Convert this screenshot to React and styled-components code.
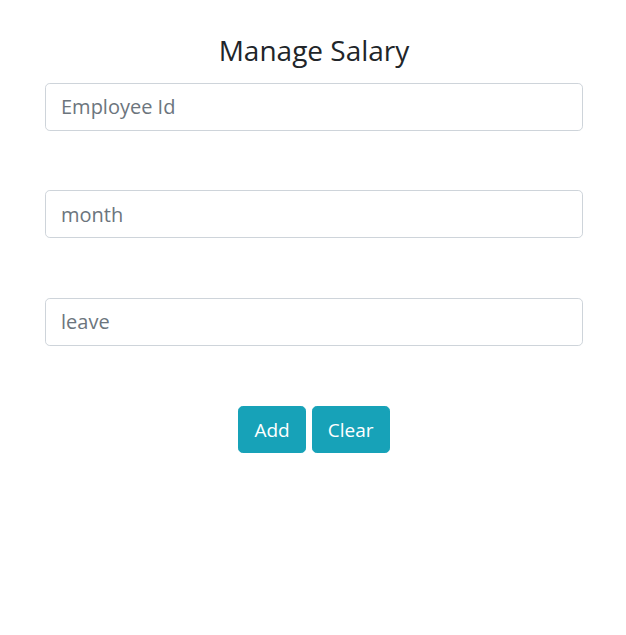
import React from 'react';
import styled, { createGlobalStyle } from 'styled-components';

const Global = createGlobalStyle`
  body {
    margin: 0;
    background: #fff;
    font-family: "Open Sans", "Noto Sans", sans-serif;
    color: #212529;
  }
  * { box-sizing: border-box; }
`;

const Page = styled.div`
  padding: 34px 43px 0 45px;
  display: flex;
  flex-direction: column;
`;

const Title = styled.h3`
  margin: 0 0 15px;
  font-size: 28px;
  font-weight: 400;
  line-height: 1.2;
  text-align: center;
`;

const Fields = styled.div`
  display: flex;
  flex-direction: column;
  gap: 59.5px;
`;

const Input = styled.input`
  display: block;
  width: 100%;
  height: 48px;
  padding: 8px 15px;
  font-family: inherit;
  font-size: 20px;
  line-height: 1.5;
  color: #495057;
  background: #fff;
  border: 1px solid #ced4da;
  border-radius: 4.8px;
  outline: none;

  &::placeholder {
    color: #6c757d;
  }
`;

const Actions = styled.div`
  margin-top: 60.5px;
  display: flex;
  justify-content: center;
  gap: 6px;
`;

const Button = styled.button`
  height: 47px;
  padding: 0 15px;
  font-family: inherit;
  font-size: 19px;
  color: #fff;
  background: #17a2b8;
  border: 1px solid #17a2b8;
  border-radius: 4.8px;
  cursor: pointer;
`;

export default function App() {
  return (
    <>
      <Global />
      <Page>
        <Title>Manage Salary</Title>
        <Fields>
          <Input placeholder="Employee Id" />
          <Input placeholder="month" />
          <Input placeholder="leave" />
        </Fields>
        <Actions>
          <Button>Add</Button>
          <Button>Clear</Button>
        </Actions>
      </Page>
    </>
  );
}
